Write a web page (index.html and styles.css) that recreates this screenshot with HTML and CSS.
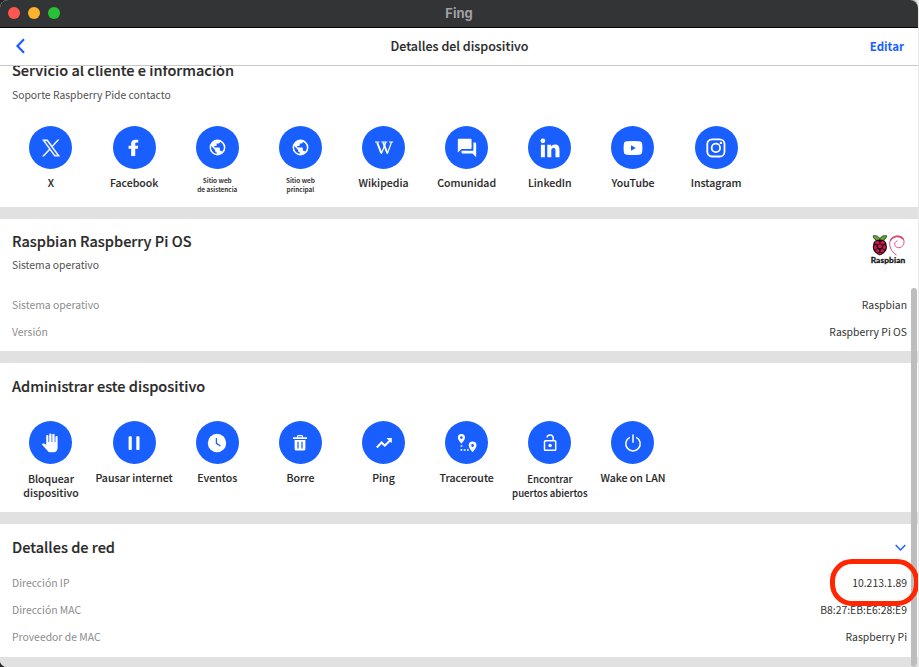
FILE: index.html
```html
<!DOCTYPE html>
<html lang="es">
<head>
<meta charset="utf-8">
<title>Fing</title>
<link rel="stylesheet" href="styles.css">
</head>
<body>
<div class="window">
  <header class="titlebar">
    <div class="lights"><i class="light red"></i><i class="light amber"></i><i class="light green"></i></div>
    <span class="app-name">Fing</span>
  </header>
  <nav class="navbar">
    <svg class="back" viewBox="0 0 10 16"><path d="M8.500 1.200 2 8l6.500 6.800"/></svg>
    <h1>Detalles del dispositivo</h1>
    <a class="edit">Editar</a>
  </nav>
  <main class="content">
    <section class="support">
      <h2>Servicio al cliente e información</h2>
      <p class="sub">Soporte Raspberry Pide contacto</p>
      <div class="tiles">
        <div class="tile"><div class="disc"><svg class="x-logo" width="18" height="18" viewBox="0 0 24 24"><path d="M14.200 10.300 22.800 1h-2l-7.400 8.100L7.500 1H.6l9 12.300L.6 23h2l7.900-8.500L16.700 23h6.900zM3.500 2.600h3.200l14 18.900h-3.200z"/></svg></div><span class="label">X</span></div>
        <div class="tile"><div class="disc"><svg width="20" height="20" viewBox="0 0 24 24"><path d="M8.600 21.500V13H5.500V9.300h3.100V6.900C8.600 3.700 10.400 2 13.600 2h3.500v3.500h-2c-1.300 0-1.600.7-1.600 1.700v2.100h3.600l-.5 3.700h-3.100v8.500z"/></svg></div><span class="label">Facebook</span></div>
        <div class="tile"><div class="disc"><svg width="19" height="19" viewBox="0 0 24 24"><path d="M17.900 17.390C17.640 16.590 16.890 16 16 16H15V13A1 1 0 0 0 14 12H8V10H10A1 1 0 0 0 11 9V7H13A2 2 0 0 0 15 5V4.590C17.930 5.770 20 8.640 20 12C20 14.080 19.200 15.970 17.900 17.390M11 19.930C7.050 19.440 4 16.080 4 12C4 11.380 4.080 10.780 4.210 10.210L9 15V16A2 2 0 0 0 11 18M12 2A10 10 0 0 0 2 12A10 10 0 0 0 12 22A10 10 0 0 0 22 12A10 10 0 0 0 12 2Z"/></svg></div><span class="label tiny">Sitio web<br>de asistencia</span></div>
        <div class="tile"><div class="disc"><svg width="19" height="19" viewBox="0 0 24 24"><path d="M17.900 17.390C17.640 16.590 16.890 16 16 16H15V13A1 1 0 0 0 14 12H8V10H10A1 1 0 0 0 11 9V7H13A2 2 0 0 0 15 5V4.590C17.930 5.770 20 8.640 20 12C20 14.080 19.200 15.970 17.900 17.390M11 19.930C7.050 19.440 4 16.080 4 12C4 11.380 4.080 10.780 4.210 10.210L9 15V16A2 2 0 0 0 11 18M12 2A10 10 0 0 0 2 12A10 10 0 0 0 12 22A10 10 0 0 0 22 12A10 10 0 0 0 12 2Z"/></svg></div><span class="label tiny">Sitio web<br>principal</span></div>
        <div class="tile"><div class="disc"><svg class="line wiki" width="20" height="20" viewBox="0 0 20 20"><path class="heavy" d="M3.200 4.500 7.300 15.200M9.200 4.500 13.300 15.200"/><path d="M7.300 15.700 11.800 4.500M13.300 15.700 17.400 4.500M1 4h4.400M7.200 4h6M15 4h4.200"/></svg></div><span class="label">Wikipedia</span></div>
        <div class="tile"><div class="disc"><svg width="22" height="22" viewBox="0 0 24 24"><path d="M3 2h13a1 1 0 0 1 1 1v9a1 1 0 0 1-1 1H6l-4 4V3a1 1 0 0 1 1-1M19 6h2a1 1 0 0 1 1 1v15l-4-4H7a1 1 0 0 1-1-1v-2h13z"/></svg></div><span class="label">Comunidad</span></div>
        <div class="tile"><div class="disc"><svg width="20" height="20" viewBox="0 0 20 20"><circle cx="2.900" cy="2.800" r="2.400"/><path d="M.9 6.800h4v12.400h-4zM7.300 6.800h3.800v1.800c.8-1.400 2.100-2.100 3.900-2.100 3.700 0 4.500 2.300 4.500 5.700v7h-4v-6.300c0-1.600-.2-3-2-3s-2.200 1.300-2.200 2.900v6.400h-4z"/></svg></div><span class="label">LinkedIn</span></div>
        <div class="tile"><div class="disc"><svg width="20" height="20" viewBox="0 0 20 20"><path fill-rule="evenodd" d="M4 3.200Q10 2.700 16 3.200q3 .2 3.200 3 .4 3.800 0 7.600-.2 2.800-3.200 3-6 .5-12 0-3-.2-3.200-3-.4-3.800 0-7.600.2-2.800 3.200-3M8 7.200v5.600l4.800-2.800z"/></svg></div><span class="label">YouTube</span></div>
        <div class="tile"><div class="disc"><svg class="line insta" width="20" height="20" viewBox="0 0 20 20"><rect x="1.300" y="1.300" width="17.200" height="17.200" rx="4.800"/><circle cx="9.900" cy="9.900" r="4.200"/><circle class="solid" cx="14.900" cy="4.900" r="1.200"/></svg></div><span class="label">Instagram</span></div>
      </div>
    </section>
    <section class="system">
      <div class="row-head">
        <div><h2>Raspbian Raspberry Pi OS</h2><p class="sub">Sistema operativo</p></div>
        <div class="logo">
          <svg viewBox="0 0 36 22">
            <path class="leaf" d="M9.500 6C5 6.500 3 4 2.500.8 6 .2 9 1.500 9.500 5 10 1.500 13 .2 16.500.8 16 4 14 6.500 9.500 6Z"/>
            <path class="berry-edge" d="M9.500 5C14 4.500 16.500 7 16.500 10.500c1.500 4-1.500 8-4 9.300l-3 1.700-3-1.700c-2.500-1.300-5.500-5.300-4-9.300C2.500 7 5 4.500 9.500 5Z"/>
            <g class="seed"><ellipse cx="6.700" cy="8" rx="2.400" ry="1.600"/><ellipse cx="12.300" cy="8" rx="2.400" ry="1.600"/><circle cx="9.500" cy="11.800" r="2.100"/><ellipse cx="4.800" cy="12.800" rx="1.500" ry="2.300"/><ellipse cx="14.200" cy="12.800" rx="1.500" ry="2.300"/><circle cx="7" cy="16.600" r="1.900"/><circle cx="12" cy="16.600" r="1.900"/><ellipse cx="9.500" cy="19.500" rx="1.700" ry="1"/></g>
            <path class="swirl" d="M27 21C20 17 17.500 8 22 3.500c4-4 12-3.500 12.800 3 .5 5-4.500 8.500-8.300 6-2.500-1.800-2-5.500 1.500-6.300"/>
            <path class="swirl bold" d="M20.500 6C23 .8 31-.2 34 4.500"/>
          </svg>
          <span>Raspbian</span>
        </div>
      </div>
      <dl>
        <div><dt>Sistema operativo</dt><dd>Raspbian</dd></div>
        <div><dt>Versión</dt><dd>Raspberry Pi OS</dd></div>
      </dl>
    </section>
    <section class="manage">
      <h2>Administrar este dispositivo</h2>
      <div class="tiles">
        <div class="tile"><div class="disc"><svg width="20" height="20" viewBox="0 0 20 20"><path d="M5.200 3.200a1.100 1.100 0 0 1 2.200 0V9h.8V1.600a1.150 1.150 0 0 1 2.300 0V9h.8V2a1.150 1.150 0 0 1 2.300 0v7.300h.8V4a1.100 1.100 0 0 1 2.200 0v11c0 2.600-1.600 4.200-4 4.200H9.700c-1.500 0-2.300-.5-3.200-1.500L.7 11.300c1.300-1.300 2.500-1 4.500.6z"/></svg></div><span class="label wrap">Bloquear<br>dispositivo</span></div>
        <div class="tile"><div class="disc"><svg width="20" height="20" viewBox="0 0 20 20"><rect x="4.600" y="3.200" width="3.200" height="13.800" rx=".8"/><rect x="12.300" y="3.200" width="3.200" height="13.800" rx=".8"/></svg></div><span class="label">Pausar internet</span></div>
        <div class="tile"><div class="disc"><svg width="20" height="20" viewBox="0 0 20 20"><circle cx="10" cy="10" r="9.200"/><path class="cut" d="M9.400 5v5.300l4 2.700"/></svg></div><span class="label">Eventos</span></div>
        <div class="tile"><div class="disc"><svg width="20" height="20" viewBox="0 0 20 20"><path fill-rule="evenodd" d="M3 4.200h3.800L7.600 2h4.800l.8 2.200H17v1.700H3zM8.200 3.300 8 4.200h4l-.2-.9zM4.600 7h10.800v9q0 1.600-1.600 1.600H6.200q-1.600 0-1.600-1.600zM7.400 8.700v6.800h1.200V8.700zm4 0v6.800h1.200V8.700z"/></svg></div><span class="label">Borre</span></div>
        <div class="tile"><div class="disc"><svg class="line" width="20" height="20" viewBox="0 0 20 20"><path class="trend" d="m2.800 14.500 4.800-5 3.200 3.200L16 7.500"/><path class="solid" d="M12.500 5h5.300v5.300z"/></svg></div><span class="label">Ping</span></div>
        <div class="tile"><div class="disc"><svg width="20" height="20" viewBox="0 0 20 20"><path fill-rule="evenodd" d="M4.400 1a3.600 3.600 0 0 1 3.600 3.600c0 2.400-3.600 6.200-3.600 6.200S.8 7 .8 4.600A3.600 3.600 0 0 1 4.400 1m0 2.300a1.300 1.300 0 1 0 0 2.600 1.300 1.300 0 0 0 0-2.600M15.600 8.600a3.900 3.900 0 0 1 3.900 3.900c0 2.500-3.900 6.600-3.900 6.600s-3.900-4.100-3.900-6.600a3.900 3.900 0 0 1 3.900-3.900m0 2.500a1.400 1.400 0 1 0 0 2.800 1.400 1.400 0 0 0 0-2.800"/><path d="M3.600 12.200h1.700v1.600H3.600zM3.600 16h1.700v1.800H3.600zM6.800 16.200h1.800v1.600H6.800zM10 16.200h1.800v1.600H10z"/></svg></div><span class="label">Traceroute</span></div>
        <div class="tile"><div class="disc"><svg class="line" width="20" height="20" viewBox="0 0 20 20"><rect x="4.500" y="7.800" width="11.200" height="9.500" rx=".8"/><path d="M7 4.500c.5-3.300 5.900-3.300 6.200.3v3"/><circle class="solid" cx="10.100" cy="12.500" r="1.700"/></svg></div><span class="label wrap small">Encontrar<br>puertos abiertos</span></div>
        <div class="tile"><div class="disc"><svg class="line" width="20" height="20" viewBox="0 0 20 20"><path d="M10 1.500v8.300M6.800 4.300a7.200 7.200 0 1 0 6.400 0"/></svg></div><span class="label">Wake on LAN</span></div>
      </div>
    </section>
    <section class="network">
      <div class="row-head"><h2>Detalles de red</h2><svg class="chevron" viewBox="0 0 10 7"><path d="m.6 1 4.400 4.400L9.400 1"/></svg></div>
      <dl>
        <div><dt>Dirección IP</dt><dd class="marked">10.213.1.89</dd></div>
        <div><dt>Dirección MAC</dt><dd>B8:27:EB:E6:28:E9</dd></div>
        <div><dt>Proveedor de MAC</dt><dd>Raspberry Pi</dd></div>
      </dl>
    </section>
  </main>
  <div class="scrollbar"></div>
</div>
</body>
</html>
```
FILE: styles.css
```css
*, *::after { box-sizing: border-box; }
body {
  margin: 0;
  width: 919px;
  height: 667px;
  overflow: hidden;
  background: linear-gradient(90deg, #26282b 900px, #e9e9e9 918px);
  font-family: "Noto Sans CJK SC", "Noto Sans", sans-serif;
  color: #2a2a2a;
}
h1, h2, p, dl, dt, dd { margin: 0; }
.window {
  position: relative;
  display: flex;
  flex-direction: column;
  width: 918px;
  height: 667px;
  background: #fff;
  border-radius: 8px 8px 7px 7px;
  overflow: hidden;
}
.titlebar {
  position: relative;
  flex: none;
  display: flex;
  align-items: center;
  justify-content: center;
  height: 28px;
  background: #323435;
  border-bottom: 1px solid #050505;
}
.lights { position: absolute; left: 8px; top: 7px; display: flex; gap: 8px; }
.light { width: 12px; height: 12px; border-radius: 50%; }
.red { background: #ff5750; }
.amber { background: #fdb42c; }
.green { background: #28c237; }
.app-name { font: 700 13px/16px Inter, sans-serif; color: #a0a1a2; margin-top: -2px; }
.navbar {
  flex: none;
  display: grid;
  grid-template-columns: 1fr auto 1fr;
  align-items: center;
  height: 38px;
  padding: 0 14px 2px 15px;
  border-bottom: 1px solid #c9c9c9;
}
.back { width: 11px; height: 16px; fill: none; stroke: #195eff; stroke-width: 2.200; margin-top: 1px; }
h1 { font-size: 12.500px; font-weight: 500; line-height: 20px; -webkit-text-stroke: .12px; }
.edit { justify-self: end; font-size: 11.500px; font-weight: 700; line-height: 20px; color: #195eff; }
.content { flex: 1; overflow: hidden; }
section { border-bottom: 12px solid #e1e1e1; padding: 0 11px 0 12px; }
.support { height: 158.500px; margin-top: -6px; }
.support .sub { margin-top: 7px; }
.system { height: 144.500px; padding-top: 12px; }
.manage { height: 161px; padding-top: 13px; }
.network { height: 145px; padding-top: 13px; }
h2 { font-size: 14.550px; font-weight: 500; line-height: 20px; -webkit-text-stroke: .15px; }
.sub { font-size: 10.350px; line-height: 16px; color: #505050; margin-top: 6.500px; }
.tiles { display: flex; margin: 23px 0 0 -2.600px; }
.manage .tiles { margin-top: 25px; }
.tile { flex: none; width: 83.150px; display: flex; flex-direction: column; align-items: center; }
.disc { width: 43px; height: 43px; border-radius: 50%; background: #195eff; display: flex; align-items: center; justify-content: center; }
.disc svg { fill: #fff; }
.disc svg.line { fill: none; stroke: #fff; stroke-width: 1.500; }
.disc svg.insta { stroke-width: 1.800; }
.disc svg.wiki { stroke-width: 1.200; }
.disc svg.x-logo { stroke: #fff; stroke-width: .6; }
.disc .solid { fill: #fff; stroke: none; }
.disc .heavy { stroke-width: 2; }
.disc .trend { stroke-width: 2; }
.disc .cut { fill: none; stroke: #195eff; stroke-width: 1.300; }
.label { font-size: 10.550px; font-weight: 500; line-height: 14px; margin-top: 6.500px; text-align: center; white-space: nowrap; -webkit-text-stroke: .1px; }
.manage .label { margin-top: 7px; }
.manage .label.wrap { margin-top: 8px; }
.label.tiny { font-size: 6.500px; line-height: 9px; }
.label.small { font-size: 9.600px; }
.row-head { display: flex; justify-content: space-between; align-items: flex-start; }
.logo { width: 36px; margin: 4px 1px 0 0; display: flex; flex-direction: column; align-items: center; }
.logo svg { width: 36px; height: 21px; overflow: visible; }
.logo span { font: 700 8.400px/8px Lato, sans-serif; letter-spacing: .1px; color: #111; -webkit-text-stroke: .3px #111; }
.leaf { fill: #61a832; stroke: #17200c; stroke-width: .8; }
.berry-edge { fill: #250412; }
.seed { fill: #c81b4c; }
.swirl { fill: none; stroke: #dc4870; stroke-width: 1; }
.swirl.bold { stroke-width: 1.600; }
dl > div { display: flex; justify-content: space-between; height: 27px; align-items: center; font-size: 10.400px; line-height: 16px; }
dt { color: #8c8c8c; }
dd { color: #333; position: relative; }
.system dl { margin-top: 18.500px; }
.network dl { margin-top: 12.500px; }
.chevron { width: 11px; height: 7.700px; margin: 7px 1px 0 0; fill: none; stroke: #195eff; stroke-width: 1.300; }
.marked::after {
  content: "";
  position: absolute;
  right: -11.500px;
  top: -16px;
  width: 88.500px;
  height: 46.500px;
  border: 5px solid #ff2600;
  border-radius: 22px;
  z-index: 3;
}
.scrollbar { position: absolute; right: 1px; top: 288px; bottom: 0; width: 6px; border-radius: 3px; background: #bdbdbd; }
```
